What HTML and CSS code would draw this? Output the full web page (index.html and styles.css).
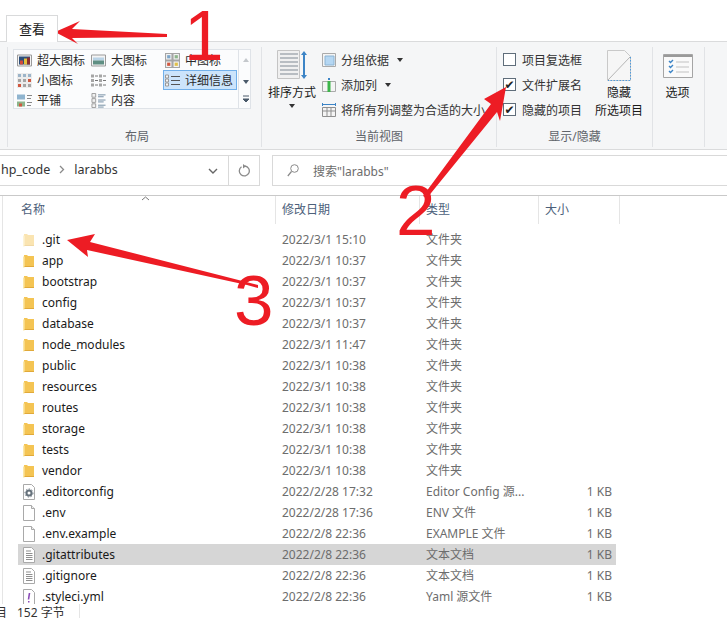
FILE: index.html
```html
<!DOCTYPE html>
<html lang="zh-CN">
<head>
    <meta charset="UTF-8">
    <title>larabbs</title>
    <link rel="stylesheet" href="styles.css">
</head>
<body>
    <svg class="defs" width="0" height="0">
        <symbol id="folder" viewBox="0 0 12 14">
            <path d="M1 1h3l1 1h6v11H1z" fill="#f4c453"/>
            <path d="M0 2.5h1.6v11H0z" fill="#fbe7a6"/>
            <path d="M1.6 12h9.4v1H1.6z" fill="#e0a93a"/>
        </symbol>
        <symbol id="file" viewBox="0 0 12 16">
            <path d="M.5.5h8l3 3v12H.5z" fill="#fff" stroke="#a9a9a9"/>
            <path d="M8.5.5v3h3" fill="#eee" stroke="#a9a9a9"/>
        </symbol>
        <symbol id="textfile" viewBox="0 0 12 16">
            <path d="M.5.5h8l3 3v12H.5z" fill="#fff" stroke="#a9a9a9"/>
            <path d="M3 4h5M3 6.500h6.500M3 8.500h6.500M3 10.500h6.500M3 12.500h6.500" stroke="#8f8f8f" fill="none"/>
        </symbol>
        <symbol id="configfile" viewBox="0 0 12 16">
            <path d="M.5.5h8l3 3v12H.5z" fill="#fff" stroke="#a9a9a9"/>
            <circle cx="6" cy="9" r="2.500" fill="none" stroke="#66727c" stroke-width="2"/>
            <circle cx="6" cy="9" r="4" fill="none" stroke="#66727c" stroke-dasharray="1.500 1.500"/>
        </symbol>
        <symbol id="yamlfile" viewBox="0 0 12 16">
            <path d="M.5.5h8l3 3v12H.5z" fill="#fff" stroke="#a9a9a9"/>
            <path d="M6.500 4l-1 6.500" stroke="#8a4bb8" stroke-width="1.600"/>
            <path d="M5 12h1.500v1.500H5z" fill="#8a4bb8"/>
        </symbol>
        <symbol id="thumb" viewBox="0 0 15 12">
            <path d="M.5.500h14v11H.5z" fill="#f4f4f4" stroke="#9b9b9b"/>
            <path d="M2 3h11v3H2z" fill="#b9d3e6"/>
            <path d="M2 6h11v4H2z" fill="#5f8f83"/>
        </symbol>
        <symbol id="thumbdark" viewBox="0 0 15 12">
            <path d="M.5.500h14v11H.5z" fill="#f4f4f4" stroke="#9b9b9b"/>
            <path d="M2 2h11v8H2z" fill="#2d4f7a"/>
            <path d="M3 6h3v4H3z" fill="#d24b3a"/>
            <path d="M7 4h3v6H7z" fill="#e5c13d"/>
            <path d="M10 3h3v7h-3z" fill="#8a2f2f"/>
        </symbol>
        <symbol id="grid4" viewBox="0 0 14 14">
            <path d="M.5.500h6v6h-6zM7.500.500h6v6h-6zM.5 7.500h6v6h-6zM7.500 7.500h6v6h-6z" fill="#f3f3f3" stroke="#a5a5a5"/>
            <path d="M2 2h3v3H2z" fill="#7da5c8"/>
            <path d="M9 2h3v3H9z" fill="#8db58b"/>
            <path d="M2 9h3v3H2z" fill="#d1573f"/>
            <path d="M9 9h3v3H9z" fill="#e0c04a"/>
        </symbol>
        <symbol id="grid9" viewBox="0 0 15 15">
            <path d="M0 0h15v15H0z" fill="#ececec"/>
            <path d="M1 1h3v3H1zM6 1h3v3H6zM11 1h3v3h-3z" fill="#9bb4c9"/>
            <path d="M1 6h3v3H1zM6 6h3v3H6z" fill="#a5a5a5"/>
            <path d="M11 6h3v3h-3z" fill="#d1573f"/>
            <path d="M1 11h3v3H1z" fill="#d1573f"/>
            <path d="M6 11h3v3H6zM11 11h3v3h-3z" fill="#a5a5a5"/>
        </symbol>
        <symbol id="listicon" viewBox="0 0 15 14">
            <path d="M0 1h3v3H0zM0 5.500h3v3H0zM0 10h3v3H0zM8 1h3v3H8zM8 5.500h3v3H8zM8 10h3v3H8z" fill="#a5a5a5"/>
            <path d="M4 2.500h3M4 7h3M4 11.500h3M12 2.500h3M12 7h3M12 11.500h3" stroke="#777"/>
        </symbol>
        <symbol id="detail" viewBox="0 0 15 14">
            <path d="M.5 1.500h3v3h-3zM.5 5.500h3v3h-3zM.5 9.500h3v3h-3z" fill="#f4f4f4" stroke="#999"/>
            <path d="M6 3h9M6 7h9M6 11h9" stroke="#555"/>
        </symbol>
        <symbol id="tile" viewBox="0 0 15 14">
            <path d="M0 1h8v5H0z" fill="#8fb4cf"/>
            <path d="M0 8h8v5H0z" fill="#8db58b"/>
            <path d="M2 10h3v3H2z" fill="#d1573f"/>
            <path d="M10 2h5M10 5h4M10 9h5M10 12h4" stroke="#888"/>
        </symbol>
        <symbol id="content" viewBox="0 0 15 16">
            <path d="M.5.500h4v4h-4zM.5 6h4v4h-4zM.5 11.500h4v4h-4z" fill="#f1f1f1" stroke="#9b9b9b"/>
            <path d="M7 2h8M7 4h6M7 7.500h8M7 9.500h6M7 13h8M7 15h6" stroke="#6f8aa0"/>
        </symbol>
    </svg>

    <div class="window">
        <div class="tabs">
            <div class="tab">查看</div>
        </div>

        <div class="ribbon">
            <section class="group group-layout">
                <div class="group-body">
                    <div class="gallery">
                        <div class="gallery-items">
                            <div class="gallery-item"><svg class="gi"><use href="#thumbdark"/></svg>超大图标</div>
                            <div class="gallery-item"><svg class="gi"><use href="#thumb"/></svg>大图标</div>
                            <div class="gallery-item"><svg class="gi"><use href="#grid4"/></svg>中图标</div>
                            <div class="gallery-item"><svg class="gi"><use href="#grid9"/></svg>小图标</div>
                            <div class="gallery-item"><svg class="gi"><use href="#listicon"/></svg>列表</div>
                            <div class="gallery-item active"><svg class="gi"><use href="#detail"/></svg>详细信息</div>
                            <div class="gallery-item"><svg class="gi"><use href="#tile"/></svg>平铺</div>
                            <div class="gallery-item"><svg class="gi"><use href="#content"/></svg>内容</div>
                        </div>
                        <div class="gallery-scroll">
                            <svg width="8" height="50" viewBox="0 0 8 50">
                                <path d="M1 9l3-4 3 4z" fill="#c4c8cc"/>
                                <path d="M1 27h6l-3 4z" fill="#4a5a6a"/>
                                <path d="M1 43h6M1 46h6l-3 3z" stroke="#4a5a6a" fill="#4a5a6a"/>
                            </svg>
                        </div>
                    </div>
                </div>
                <div class="group-label">布局</div>
            </section>

            <section class="group group-view">
                <div class="group-body view-body">
                    <div class="big-button sort-button">
                        <svg class="sort-icon" width="30" height="30" viewBox="0 0 30 30">
                            <path d="M.5.500h22v28H.5z" fill="#f0f0f0" stroke="#c4c4c4"/>
                            <path d="M3 4h18M3 8h18M3 12h18M3 16h18M3 20h18M3 24h18" stroke="#b8bdc2" stroke-width="2"/>
                            <path d="M27 1l-3 4h6zM27 29l-3-4h6z" fill="#3c84c6"/>
                            <path d="M27 3v24" stroke="#3c84c6" stroke-width="2"/>
                        </svg>
                        <span>排序方式</span>
                        <i class="caret"></i>
                    </div>
                    <div class="view-list">
                        <div class="view-row">
                            <svg width="14" height="14" viewBox="0 0 14 14"><path d="M.5.500h13v13H.5z" fill="#f4f4f4" stroke="#aaa"/><path d="M3 3h9v9H3z" fill="#b5d7f3" stroke="#8cb4d4"/></svg>
                            分组依据 <i class="caret"></i>
                        </div>
                        <div class="view-row">
                            <svg width="14" height="14" viewBox="0 0 14 14"><path d="M.5 3.500h13v10H.5z" fill="#f4f4f4" stroke="#aaa"/><path d="M5.500 3h3v11h-3z" fill="#3db54a"/><path d="M6 0h2v2H6z" fill="#3c84c6"/></svg>
                            添加列 <i class="caret"></i>
                        </div>
                        <div class="view-row">
                            <svg width="14" height="14" viewBox="0 0 14 14"><path d="M.5 4.500h13v9H.5zM5 4.500v9M9 4.500v9M.5 8h13" fill="#f4f4f4" stroke="#8f8f8f"/><path d="M.5 1.500h13M.5 0v3M13.500 0v3" stroke="#3c84c6" fill="none"/></svg>
                            将所有列调整为合适的大小
                        </div>
                    </div>
                </div>
                <div class="group-label">当前视图</div>
            </section>

            <section class="group group-show">
                <div class="group-body show-body">
                    <div class="check-list">
                        <label class="check-row"><span class="box"></span>项目复选框</label>
                        <label class="check-row"><span class="box checked">✔</span>文件扩展名</label>
                        <label class="check-row"><span class="box checked">✔</span>隐藏的项目</label>
                    </div>
                    <div class="big-button hide-button">
                        <svg width="24" height="31" viewBox="0 0 24 31">
                            <path d="M.5.500h17l6 6v24H.5z" fill="#f6f6f6" stroke="#c9c9c9"/>
                            <path d="M1 30L23 7" stroke="#b5b5b5"/>
                            <path d="M23.500 7v23.500H1" fill="none" stroke="#4f9bdc" stroke-dasharray="1.500 1.500"/>
                        </svg>
                        <span>隐藏</span>
                        <span>所选项目</span>
                    </div>
                </div>
                <div class="group-label">显示/隐藏</div>
            </section>

            <section class="group group-options">
                <div class="big-button options-button">
                    <svg width="30" height="24" viewBox="0 0 30 24">
                        <path d="M.5.500h29v23H.5z" fill="#fafafa" stroke="#a5a5a5"/>
                        <path d="M1 1h28v2H1z" fill="#9a9a9a"/>
                        <path d="M6 7l1.500 1.500L10 6M6 12l1.500 1.500L10 11M6 17l1.500 1.500L10 16" stroke="#3c84c6" stroke-width="1.400" fill="none"/>
                        <path d="M13 8h13M13 13h13M13 18h13" stroke="#c2c2c2"/>
                    </svg>
                    <span>选项</span>
                </div>
            </section>
        </div>

        <div class="address-row">
            <div class="breadcrumb">
                <div class="crumbs">
                    <span>hp_code</span>
                    <svg width="6" height="9" viewBox="0 0 6 9"><path d="M1 1l3.500 3.500L1 8" fill="none" stroke="#8a8a8a" stroke-width="1.300"/></svg>
                    <span>larabbs</span>
                </div>
                <svg class="drop" width="10" height="6" viewBox="0 0 10 6"><path d="M1 1l4 4 4-4" fill="none" stroke="#666" stroke-width="1.400"/></svg>
                <div class="refresh">
                    <svg width="12" height="13" viewBox="0 0 12 13"><path d="M3.500 2.800a5 5 0 1 0 3.500-.8" fill="none" stroke="#8a8a8a" stroke-width="1.300"/><path d="M5 0v4.500l3-2.200z" fill="#8a8a8a"/></svg>
                </div>
            </div>
            <div class="search">
                <svg width="12" height="13" viewBox="0 0 12 13"><circle cx="7.500" cy="4.500" r="3.800" fill="none" stroke="#8a8a8a"/><path d="M4.500 7.500L.8 12" stroke="#8a8a8a" stroke-width="1.200"/></svg>
                <span>搜索"larabbs"</span>
            </div>
        </div>

        <div class="list">
            <div class="list-head">
                <div class="col-head name-head">名称
                    <svg class="sort-mark" width="9" height="5" viewBox="0 0 9 5"><path d="M1 4l3.500-3L8 4" fill="none" stroke="#777"/></svg>
                </div>
                <div class="col-head">修改日期</div>
                <div class="col-head">类型</div>
                <div class="col-head">大小</div>
            </div>
            <div class="rows">
                <div class="row hidden-item"><div class="name"><svg class="fi"><use href="#folder"/></svg>.git</div><div>2022/3/1 15:10</div><div>文件夹</div><div></div></div>
                <div class="row"><div class="name"><svg class="fi"><use href="#folder"/></svg>app</div><div>2022/3/1 10:37</div><div>文件夹</div><div></div></div>
                <div class="row"><div class="name"><svg class="fi"><use href="#folder"/></svg>bootstrap</div><div>2022/3/1 10:37</div><div>文件夹</div><div></div></div>
                <div class="row"><div class="name"><svg class="fi"><use href="#folder"/></svg>config</div><div>2022/3/1 10:37</div><div>文件夹</div><div></div></div>
                <div class="row"><div class="name"><svg class="fi"><use href="#folder"/></svg>database</div><div>2022/3/1 10:37</div><div>文件夹</div><div></div></div>
                <div class="row"><div class="name"><svg class="fi"><use href="#folder"/></svg>node_modules</div><div>2022/3/1 11:47</div><div>文件夹</div><div></div></div>
                <div class="row"><div class="name"><svg class="fi"><use href="#folder"/></svg>public</div><div>2022/3/1 10:38</div><div>文件夹</div><div></div></div>
                <div class="row"><div class="name"><svg class="fi"><use href="#folder"/></svg>resources</div><div>2022/3/1 10:38</div><div>文件夹</div><div></div></div>
                <div class="row"><div class="name"><svg class="fi"><use href="#folder"/></svg>routes</div><div>2022/3/1 10:38</div><div>文件夹</div><div></div></div>
                <div class="row"><div class="name"><svg class="fi"><use href="#folder"/></svg>storage</div><div>2022/3/1 10:38</div><div>文件夹</div><div></div></div>
                <div class="row"><div class="name"><svg class="fi"><use href="#folder"/></svg>tests</div><div>2022/3/1 10:38</div><div>文件夹</div><div></div></div>
                <div class="row"><div class="name"><svg class="fi"><use href="#folder"/></svg>vendor</div><div>2022/3/1 10:38</div><div>文件夹</div><div></div></div>
                <div class="row"><div class="name"><svg class="fi"><use href="#configfile"/></svg>.editorconfig</div><div>2022/2/28 17:32</div><div>Editor Config 源...</div><div class="size">1 KB</div></div>
                <div class="row"><div class="name"><svg class="fi"><use href="#file"/></svg>.env</div><div>2022/2/28 17:36</div><div>ENV 文件</div><div class="size">1 KB</div></div>
                <div class="row"><div class="name"><svg class="fi"><use href="#file"/></svg>.env.example</div><div>2022/2/8 22:36</div><div>EXAMPLE 文件</div><div class="size">1 KB</div></div>
                <div class="row selected"><div class="name"><svg class="fi"><use href="#textfile"/></svg>.gitattributes</div><div>2022/2/8 22:36</div><div>文本文档</div><div class="size">1 KB</div></div>
                <div class="row"><div class="name"><svg class="fi"><use href="#textfile"/></svg>.gitignore</div><div>2022/2/8 22:36</div><div>文本文档</div><div class="size">1 KB</div></div>
                <div class="row"><div class="name"><svg class="fi"><use href="#yamlfile"/></svg>.styleci.yml</div><div>2022/2/8 22:36</div><div>Yaml 源文件</div><div class="size">1 KB</div></div>
            </div>
        </div>

        <div class="status">
            <span class="status-cut">目</span>
            <span class="status-size">152 字节</span>
        </div>
    </div>

    <!-- red marks drawn on top of the screenshot -->
    <svg class="marks" width="727" height="618" viewBox="0 0 727 618">
        <g fill="#ed1c24">
            <polygon points="55,32 80,21 72,29 167,34 167,37 72,38 78,44"/>
            <polygon points="506,87 484,99 491,104 423,196 427,198 497,112 500,121"/>
            <polygon points="67,240 95,234 90,242 258,285 258,288 247,285 87,250 88,257"/>
            <text class="digit" x="184" y="60">1</text>
            <text class="digit" x="396" y="235">2</text>
            <text class="digit" x="234" y="325">3</text>
        </g>
    </svg>
</body>
</html>
```

FILE: styles.css
```css
* {
    box-sizing: border-box;
}
html, body {
    margin: 0;
    padding: 0;
}
body {
    position: relative;
    width: 727px;
    height: 618px;
    overflow: hidden;
    background: #fff;
    font-family: "Noto Sans", "Noto Sans CJK SC", sans-serif;
    font-size: 12px;
    color: #1a1a1a;
}
.defs {
    position: absolute;
}
.window {
    display: flex;
    flex-direction: column;
    height: 618px;
}

/* tabs */
.tabs {
    height: 41px;
    padding: 15px 0 0 6px;
    flex: none;
}
.tab {
    position: relative;
    z-index: 1;
    width: 52px;
    height: 27px;
    line-height: 26px;
    text-align: center;
    font-size: 13px;
    background: #fff;
    border: 1px solid #d9dadb;
    border-bottom: none;
}

/* ribbon */
.ribbon {
    display: flex;
    height: 109px;
    flex: none;
    padding: 5px 0 0 7px;
    background: #f5f6f7;
    border-top: 1px solid #dadbdc;
    border-bottom: 1px solid #dadbdc;
}
.group {
    display: flex;
    flex-direction: column;
    height: 100px;
    border-left: 1px solid #e1e3e6;
}
.group-body {
    flex: 1;
    min-height: 0;
}
.group-label {
    height: 20px;
    line-height: 20px;
    flex: none;
    text-align: center;
    color: #60646a;
}
.group-layout {
    width: 254px;
    padding-left: 5px;
}
.group-view {
    width: 235px;
}
.group-show {
    width: 156px;
}
.group-options {
    width: 53px;
    padding-right: 2px;
    border-right: 1px solid #e1e3e6;
}

.gallery {
    display: flex;
    width: 238px;
    height: 60px;
    margin-top: 2px;
    background: #fbfcfd;
    border: 1px solid #dfe3e8;
}
.gallery-items {
    display: grid;
    grid-template-columns: repeat(3, 74px);
    grid-auto-rows: 20px;
    width: 225px;
    padding-left: 1px;
}
.gallery-item {
    display: flex;
    align-items: center;
    gap: 5px;
    padding-left: 2px;
    color: #2b2b2b;
    white-space: nowrap;
}
.gallery-item.active {
    background: #cce4fb;
    border: 1px solid #72b0ea;
    padding-left: 1px;
}
.gi {
    width: 15px;
    height: 15px;
    flex: none;
}
.gallery-scroll {
    flex: 1;
    padding: 3px 0 0 3px;
    border-left: 1px solid #dfe3e8;
}

.view-body {
    display: flex;
    padding-left: 6px;
}
.big-button {
    display: flex;
    flex-direction: column;
    align-items: center;
}
.big-button span {
    line-height: 18px;
    white-space: nowrap;
}
.sort-button {
    width: 48px;
    padding-top: 3px;
}
.sort-icon {
    margin-bottom: 4px;
}
.caret {
    display: inline-block;
    width: 0;
    height: 0;
    margin-left: 3px;
    border: 3px solid transparent;
    border-top: 4px solid #333;
    border-bottom: none;
    vertical-align: middle;
}
.sort-button .caret {
    margin: 2px 0 0;
}
.view-list {
    display: flex;
    flex-direction: column;
    padding-left: 6px;
}
.view-row {
    display: flex;
    align-items: center;
    gap: 5px;
    height: 25px;
    color: #333;
    white-space: nowrap;
}
.show-body {
    display: flex;
    padding-left: 6px;
}
.check-list {
    width: 100px;
}
.check-row {
    display: flex;
    align-items: center;
    gap: 6px;
    height: 25px;
    white-space: nowrap;
    color: #333;
}
.box {
    display: flex;
    align-items: center;
    justify-content: center;
    width: 13px;
    height: 13px;
    background: #fff;
    border: 1px solid #5f6d7a;
    font-family: "DejaVu Sans", sans-serif;
    font-size: 12px;
    color: #222;
}
.hide-button {
    width: 50px;
    margin-left: -9px;
    padding-top: 3px;
}
.hide-button svg {
    margin-bottom: 3px;
}
.options-button {
    padding-top: 7px;
}
.options-button svg {
    margin-bottom: 6px;
}

/* address bar */
.address-row {
    display: flex;
    gap: 12px;
    height: 46px;
    flex: none;
    padding-top: 5px;
    border-bottom: 1px solid #c9c9c9;
}
.breadcrumb {
    display: flex;
    align-items: center;
    width: 260px;
    height: 31px;
    border: 1px solid #d9d9d9;
    border-left: none;
    font-size: 12.5px;
    color: #333;
}
.crumbs {
    display: flex;
    align-items: center;
    gap: 9px;
    flex: 1;
    padding: 0 0 2px 1px;
}
.drop {
    margin-right: 10px;
}
.refresh {
    display: flex;
    align-items: center;
    justify-content: center;
    width: 31px;
    height: 100%;
    border-left: 1px solid #d9d9d9;
}
.search {
    display: flex;
    align-items: center;
    gap: 14px;
    flex: 1;
    height: 31px;
    padding-left: 14px;
    border: 1px solid #d9d9d9;
    border-right: none;
    color: #6d6d6d;
}

/* file list */
.list {
    flex: 1;
    min-height: 0;
    overflow: hidden;
    margin-left: 2px;
    border-left: 1px solid #e5e5e5;
}
.list-head {
    display: grid;
    grid-template-columns: 258px 144px 119px 81px;
    height: 33px;
    padding-left: 15px;
}
.col-head {
    position: relative;
    height: 28px;
    line-height: 27px;
    padding-left: 6px;
    color: #4c607a;
    border-right: 1px solid #e5e5e5;
}
.name-head {
    padding-left: 3px;
}
.sort-mark {
    position: absolute;
    left: 123px;
    top: 0;
}
.rows {
    display: flex;
    flex-direction: column;
}
.row {
    display: grid;
    grid-template-columns: 257px 145px 119px 77px;
    flex: none;
    width: 598px;
    height: 21px;
    margin-left: 15px;
    line-height: 21px;
    color: #6d6d6d;
    white-space: nowrap;
}
.row > div {
    padding-left: 7px;
}
.row > div:nth-child(3) {
    padding-left: 6px;
}
.row .name {
    display: flex;
    align-items: center;
    gap: 7px;
    padding-left: 5px;
    color: #1a1a1a;
}
.row .size {
    padding: 0 4px 0 0;
    text-align: right;
}
.row.selected {
    background: #d6d6d6;
}
.fi {
    width: 12px;
    height: 16px;
    flex: none;
}
.hidden-item .fi {
    opacity: 0.45;
}

/* status bar */
.status {
    display: flex;
    align-items: flex-start;
    height: 14px;
    flex: none;
    overflow: hidden;
    background: #fff;
    color: #333;
    line-height: 18px;
}
.status-cut {
    margin-left: -5px;
    width: 22px;
}
.status-size {
    width: 63px;
    border-right: 1px solid #e5e5e5;
}

/* annotations over everything */
.marks {
    position: absolute;
    left: 0;
    top: 0;
}
.digit {
    font-family: "Liberation Sans", sans-serif;
    font-size: 71px;
}
```
